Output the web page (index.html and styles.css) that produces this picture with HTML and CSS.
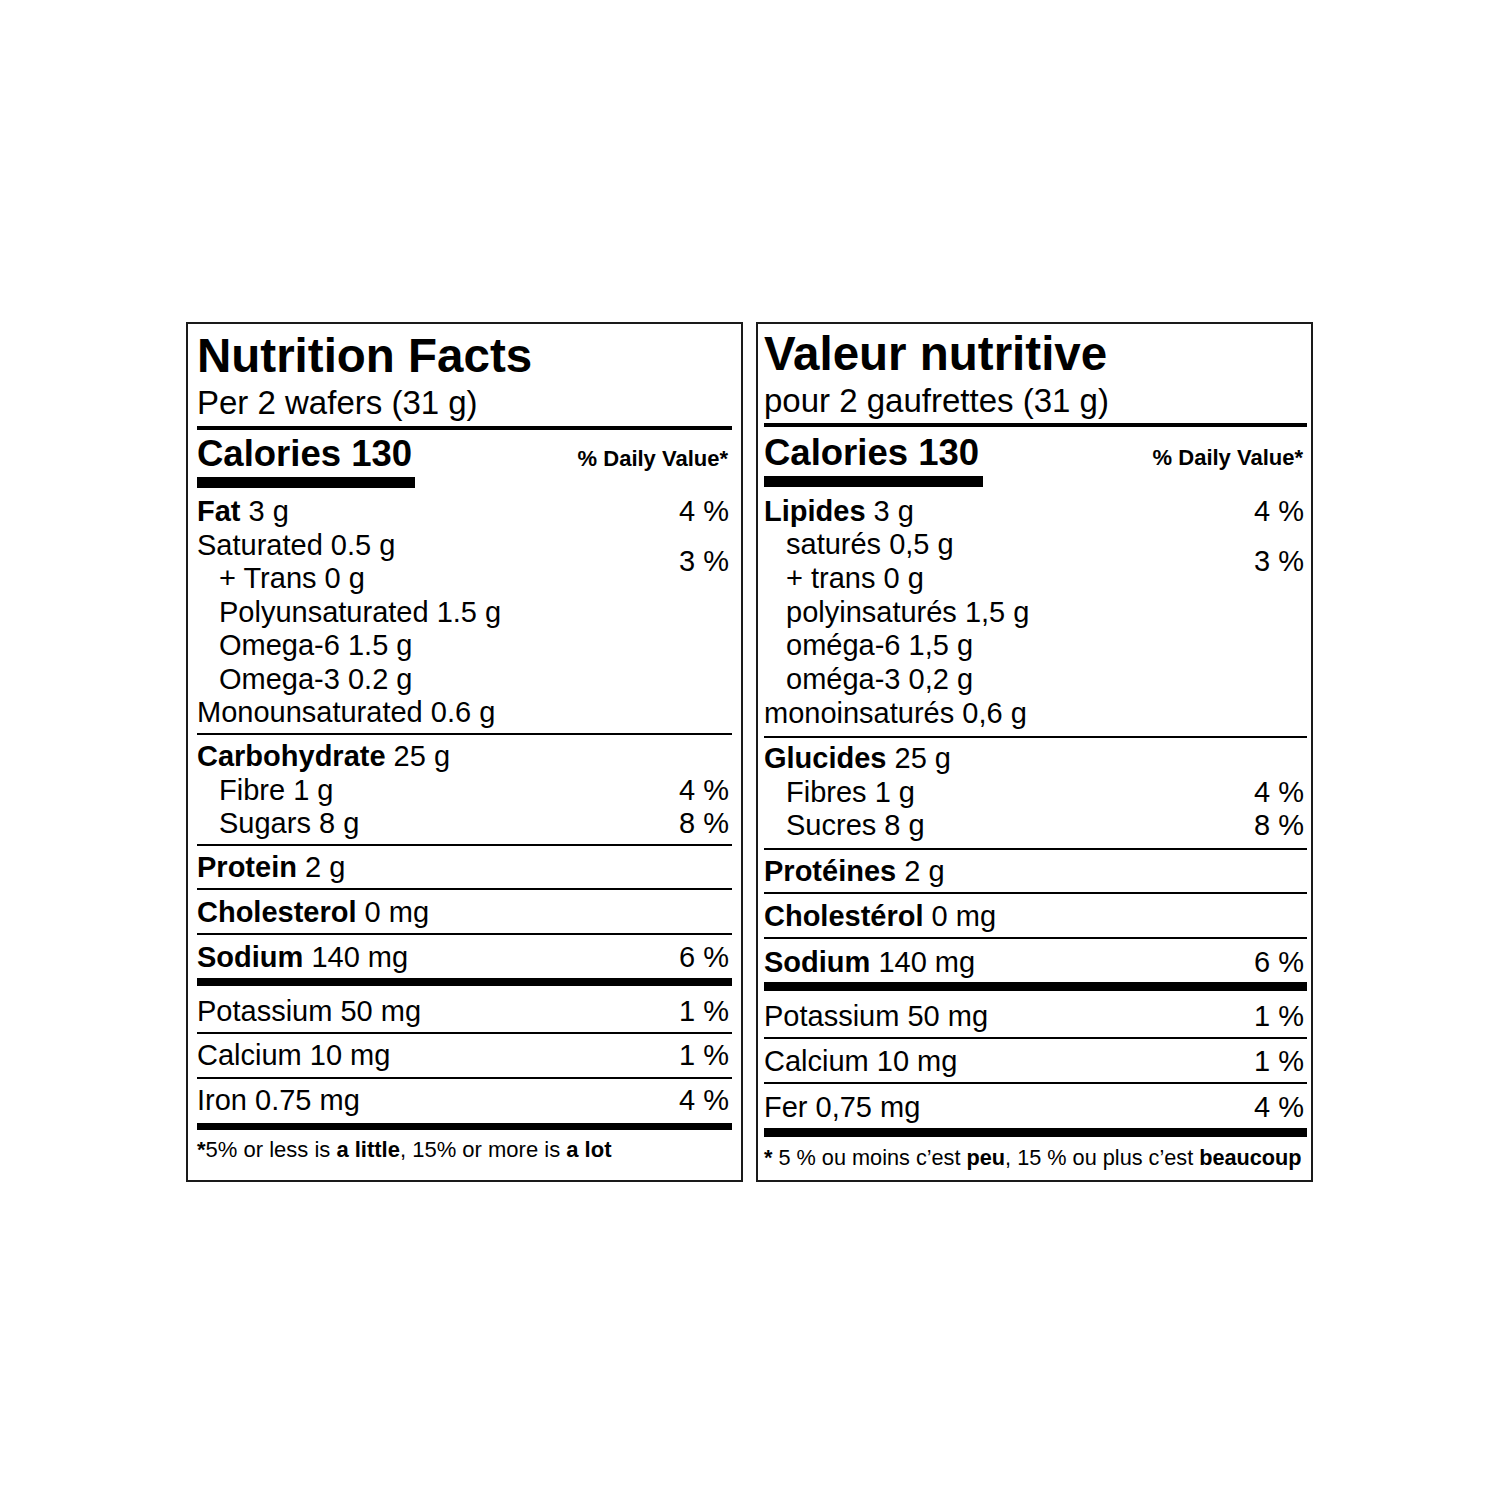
FILE: index.html
```html
<!DOCTYPE html>
<html lang="en">
<head>
<meta charset="utf-8">
<title>Nutrition Facts / Valeur nutritive</title>
<link rel="stylesheet" href="styles.css">
</head>
<body>
<div class="page">
  <section class="panel en">
    <h1 class="title">Nutrition Facts</h1>
    <div class="serving">Per 2 wafers (31 g)</div>
    <div class="cal-row">
      <span class="cal">Calories 130</span>
      <span class="dv">% Daily Value*</span>
    </div>
    <div class="sec fat">
      <div class="row"><span><b>Fat</b> 3 g</span><span class="pct">4 %</span></div>
      <div class="row">
        <div class="stack">
          <div>Saturated 0.5 g</div>
          <div class="ind">+ Trans 0 g</div>
        </div>
        <span class="pct mid">3 %</span>
      </div>
      <div class="line ind">Polyunsaturated 1.5 g</div>
      <div class="line ind">Omega-6 1.5 g</div>
      <div class="line ind">Omega-3 0.2 g</div>
      <div class="line">Monounsaturated 0.6 g</div>
    </div>
    <div class="sec carb">
      <div class="line"><b>Carbohydrate</b> 25 g</div>
      <div class="row ind"><span>Fibre 1 g</span><span class="pct">4 %</span></div>
      <div class="row ind"><span>Sugars 8 g</span><span class="pct">8 %</span></div>
    </div>
    <div class="sec prot">
      <div class="line"><b>Protein</b> 2 g</div>
    </div>
    <div class="sec chol">
      <div class="line"><b>Cholesterol</b> 0 mg</div>
    </div>
    <div class="sec sod thick">
      <div class="row"><span><b>Sodium</b> 140 mg</span><span class="pct">6 %</span></div>
    </div>
    <div class="sec pot">
      <div class="row"><span>Potassium 50 mg</span><span class="pct">1 %</span></div>
    </div>
    <div class="sec calc">
      <div class="row"><span>Calcium 10 mg</span><span class="pct">1 %</span></div>
    </div>
    <div class="sec iron thick">
      <div class="row"><span>Iron 0.75 mg</span><span class="pct">4 %</span></div>
    </div>
    <p class="foot"><b>*</b>5% or less is <b>a little</b>, 15% or more is <b>a lot</b></p>
  </section>

  <section class="panel fr" lang="fr">
    <h1 class="title">Valeur nutritive</h1>
    <div class="serving">pour 2 gaufrettes (31 g)</div>
    <div class="cal-row">
      <span class="cal">Calories 130</span>
      <span class="dv">% Daily Value*</span>
    </div>
    <div class="sec fat">
      <div class="row"><span><b>Lipides</b> 3 g</span><span class="pct">4 %</span></div>
      <div class="row">
        <div class="stack">
          <div class="ind">saturés 0,5 g</div>
          <div class="ind">+ trans 0 g</div>
        </div>
        <span class="pct mid">3 %</span>
      </div>
      <div class="line ind">polyinsaturés 1,5 g</div>
      <div class="line ind">oméga-6 1,5 g</div>
      <div class="line ind">oméga-3 0,2 g</div>
      <div class="line">monoinsaturés 0,6 g</div>
    </div>
    <div class="sec carb">
      <div class="line"><b>Glucides</b> 25 g</div>
      <div class="row ind"><span>Fibres 1 g</span><span class="pct">4 %</span></div>
      <div class="row ind"><span>Sucres 8 g</span><span class="pct">8 %</span></div>
    </div>
    <div class="sec prot">
      <div class="line"><b>Protéines</b> 2 g</div>
    </div>
    <div class="sec chol">
      <div class="line"><b>Cholestérol</b> 0 mg</div>
    </div>
    <div class="sec sod thick">
      <div class="row"><span><b>Sodium</b> 140 mg</span><span class="pct">6 %</span></div>
    </div>
    <div class="sec pot">
      <div class="row"><span>Potassium 50 mg</span><span class="pct">1 %</span></div>
    </div>
    <div class="sec calc">
      <div class="row"><span>Calcium 10 mg</span><span class="pct">1 %</span></div>
    </div>
    <div class="sec iron thick">
      <div class="row"><span>Fer 0,75 mg</span><span class="pct">4 %</span></div>
    </div>
    <p class="foot"><b>*</b> 5 % ou moins c’est <b>peu</b>, 15 % ou plus c’est <b>beaucoup</b></p>
  </section>
</div>
</body>
</html>
```

FILE: styles.css
```css
html, body {
  margin: 0;
  background: #fff;
}

body {
  color: #000;
  font-family: "Liberation Sans", Arial, Helvetica, sans-serif;
}

.page {
  display: flex;
  gap: 13px;
  padding: 322px 0 0 186px;
}

.panel {
  box-sizing: border-box;
  width: 557px;
  height: 860px;
  border: 2px solid #1a1a1a;
  display: flex;
  flex-direction: column;
  --lh: 33.5px;
}

.en {
  padding: 4px 9px 0 9px;
}

.fr {
  padding: 2px 4px 0 6px;
  --lh: 33.7px;
}

.title {
  margin: 0;
  font-size: 47.5px;
  font-weight: 700;
  line-height: 55px;
}

.serving {
  font-size: 33px;
  border-bottom: 4px solid #000;
}

.en .serving {
  line-height: 39px;
  padding-bottom: 4px;
}

.fr .serving {
  line-height: 35px;
  padding: 2px 0 5px;
}

.cal-row {
  display: flex;
  justify-content: space-between;
  align-items: baseline;
}

.cal {
  display: block;
  font-size: 36.5px;
  font-weight: 700;
  border-bottom: 11px solid #000;
  padding-right: 3px;
}

.en .cal {
  line-height: 46px;
  padding-top: 1px;
}

.fr .cal {
  line-height: 47px;
  padding-top: 2px;
  padding-right: 4px;
}

.dv {
  font-size: 22px;
  font-weight: 700;
  padding-right: 4px;
}

.sec {
  font-size: 29px;
  line-height: var(--lh);
  border-bottom: 2px solid #000;
}

.sec.thick {
  border-bottom-width: 8px;
}

.fr .sec.thick {
  border-bottom-width: 9px;
}

.en .iron {
  border-bottom-width: 7px;
}

.row {
  display: flex;
  justify-content: space-between;
}

.stack {
  display: flex;
  flex-direction: column;
}

.ind {
  padding-left: 22px;
}

.pct {
  padding-right: 3px;
}

.pct.mid {
  align-self: center;
}

b {
  font-weight: 700;
}

/* English panel section spacing */
.en .fat  { padding: 7px 0 3.5px; }
.en .carb { padding: 5px 0 3.5px; }
.en .prot { padding: 5px 0 3px; }
.en .chol { padding: 6.5px 0 3px; }
.en .sod  { padding: 6px 0 4px; }
.en .pot  { padding: 9px 0 3.5px; }
.en .calc { padding: 5px 0 4px; }
.en .iron { padding: 5.5px 0 5.5px; }

/* French panel section spacing */
.fr .fat  { padding: 7.5px 0 5.5px; }
.fr .carb { padding: 4px 0 5px; }
.fr .prot { padding: 5px 0 3.5px; }
.fr .chol { padding: 6px 0 3px; }
.fr .sod  { padding: 7px 0 2.4px; }
.fr .pot  { padding: 9px 0 3.3px; }
.fr .calc { padding: 6px 0 3.2px; }
.fr .iron { padding: 7px 0 3.2px; }

.foot {
  margin: 0;
  font-size: 22px;
  line-height: 30px;
  white-space: nowrap;
}

.en .foot {
  padding-top: 5.4px;
}

.fr .foot {
  padding-top: 6.4px;
  font-size: 21.7px;
}
```
